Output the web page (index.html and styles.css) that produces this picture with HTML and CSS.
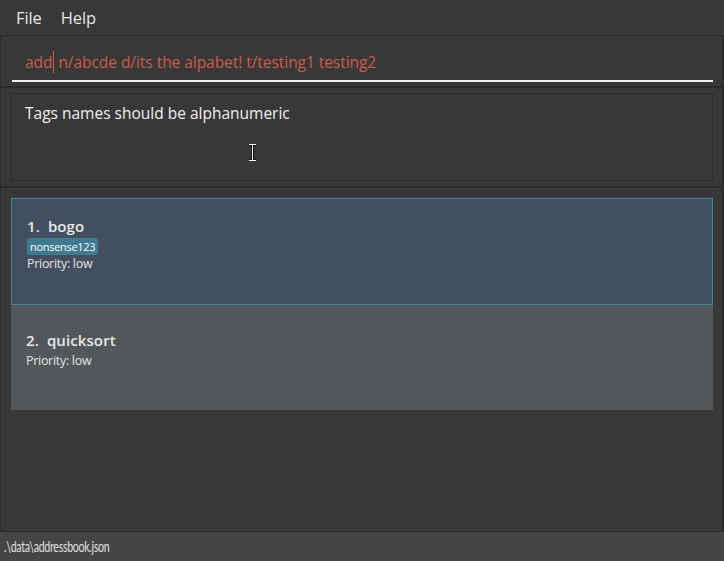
FILE: index.html
```html
<!DOCTYPE html>
<html>
<head>
<meta charset="utf-8">
<link rel="stylesheet" href="styles.css">
</head>
<body>
<div class="app">
  <div class="menubar">
    <span class="menu-item">File</span>
    <span class="menu-item">Help</span>
  </div>
  <div class="command-panel">
    <div class="command-box">
      <span class="cmd-text">add</span><span class="caret"></span><span class="cmd-text"> n/abcde d/its the alpabet! t/testing1 testing2</span>
    </div>
  </div>
  <div class="result-panel">
    <div class="result-box">
      <div class="result-text">Tags names should be alphanumeric</div>
      <svg class="ibeam" width="9" height="17" viewBox="0 0 9 17"><path d="M1 0.5h7M1 16.5h7M4.5 0.5v16" stroke="#111" stroke-width="3"/><path d="M1 0.5h7M1 16.5h7M4.5 0.5v16" stroke="#fff" stroke-width="1"/></svg>
    </div>
  </div>
  <div class="list-panel">
    <div class="card selected">
      <div class="card-title">1.&nbsp;&nbsp;bogo</div>
      <div class="tags"><span class="tag">nonsense123</span></div>
      <div class="card-line">Priority: low</div>
    </div>
    <div class="card">
      <div class="card-title">2.&nbsp;&nbsp;quicksort</div>
      <div class="card-line">Priority: low</div>
    </div>
  </div>
  <div class="statusbar"><span class="status-text">.\data\addressbook.json</span></div>
</div>
</body>
</html>
```

FILE: styles.css
```css
html, body {
  margin: 0;
  padding: 0;
  background: #383838;
}
.app {
  width: 724px;
  height: 561px;
  display: flex;
  flex-direction: column;
  font-family: "Open Sans", "Noto Sans", sans-serif;
  background: #383838;
  overflow: hidden;
}
.menubar {
  height: 35px;
  flex: none;
  display: flex;
  align-items: center;
  gap: 19px;
  padding-left: 16px;
  border-bottom: 1px solid #2b2b2b;
  box-sizing: content-box;
}
.menu-item {
  color: #e6e6e6;
  font-size: 16.5px;
  font-weight: 400;
  letter-spacing: -0.1px;
}
.command-panel {
  height: 50px;
  flex: none;
  border-left: 1px solid #2b2b2b;
  border-right: 2px solid #2b2b2b;
  border-bottom: 2px solid #2b2b2b;
  padding: 0 9px 0 11px;
  box-sizing: content-box;
}
.command-box {
  height: 46px;
  border-bottom: 2px solid #f2f2f2;
  display: flex;
  align-items: center;
  padding-left: 13px;
  padding-top: 8px;
  box-sizing: border-box;
  color: #cf5b4a;
  font-size: 15.5px;
  letter-spacing: -0.05px;
  white-space: pre;
}
.caret {
  width: 1px;
  height: 22px;
  background: #cf5b4a;
  margin-left: 1px;
}
.result-panel {
  height: 100px;
  flex: none;
  border-left: 1px solid #2b2b2b;
  border-right: 2px solid #2b2b2b;
  border-bottom: 2px solid #2b2b2b;
  padding: 5px 9px 5px 10px;
  box-sizing: border-box;
}
.result-box {
  height: 100%;
  border: 1px solid #2b2b2b;
  position: relative;
  padding: 8px 13px;
  box-sizing: border-box;
}
.result-text {
  color: #f0f0f0;
  font-size: 15.5px;
  letter-spacing: 0px;
}
.ibeam {
  position: absolute;
  left: 236px;
  top: 50px;
}
.list-panel {
  flex: 1;
  border-left: 1px solid #2b2b2b;
  border-right: 2px solid #2b2b2b;
  padding: 10px 9px 0 10px;
  display: flex;
  flex-direction: column;
}
.card {
  height: 105px;
  background: #51575a;
  padding: 25px 15px;
  box-sizing: border-box;
  flex: none;
}
.card.selected {
  height: 107px;
  background: #434e5e;
  border: 1px solid #3a8aa3;
  padding: 17px 15px;
}
.card-title {
  color: #e8e8e8;
  font-size: 15px;
  font-weight: 600;
  line-height: 21px;
  letter-spacing: 0.1px;
}
.card:not(.selected) .card-title {
  margin-bottom: 1px;
}
.tags {
  display: flex;
  margin-top: 1px;
}
.tag {
  background: #3e7b91;
  color: #ffffff;
  font-size: 11px;
  line-height: 17px;
  padding: 0 3px;
  border-radius: 2px;
  letter-spacing: -0.3px;
}
.card-line {
  color: #e3e3e3;
  font-size: 12.5px;
  line-height: 17px;
  letter-spacing: -0.3px;
}
.statusbar {
  height: 30px;
  flex: none;
  background: #454545;
  border-top: 1px solid #2b2b2b;
  display: flex;
  align-items: center;
  padding-left: 4px;
  box-sizing: border-box;
}
.status-text {
  color: #e0e0e0;
  font-family: "Lato", "Open Sans", sans-serif;
  font-weight: 400;
  font-size: 14.5px;
  letter-spacing: -0.4px;
  display: inline-block;
  transform: scaleX(0.73);
  transform-origin: left center;
  white-space: nowrap;
}
```
